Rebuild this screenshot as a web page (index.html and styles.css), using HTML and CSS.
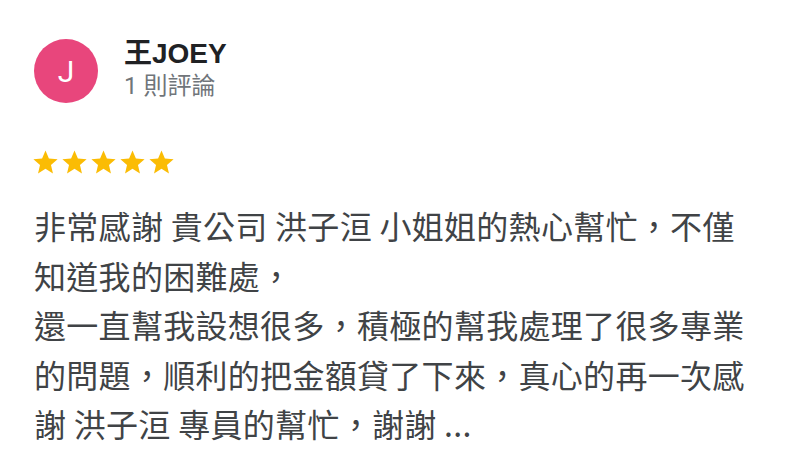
FILE: index.html
```html
<!DOCTYPE html>
<html lang="zh-Hant">
<head>
<meta charset="utf-8">
<link rel="stylesheet" href="styles.css">
</head>
<body>
<div class="review">
  <div class="header">
    <div class="avatar">J</div>
    <div class="who">
      <div class="name">王JOEY</div>
      <div class="count">1 則評論</div>
    </div>
  </div>
  <div class="stars">
    <svg viewBox="0 0 24 24"><path d="M12 17.27L18.18 21l-1.64-7.03L22 9.24l-7.19-.61L12 2 9.19 8.63 2 9.24l5.46 4.73L5.82 21z"/></svg>
    <svg viewBox="0 0 24 24"><path d="M12 17.27L18.18 21l-1.64-7.03L22 9.24l-7.19-.61L12 2 9.19 8.63 2 9.24l5.46 4.73L5.82 21z"/></svg>
    <svg viewBox="0 0 24 24"><path d="M12 17.27L18.18 21l-1.64-7.03L22 9.24l-7.19-.61L12 2 9.19 8.63 2 9.24l5.46 4.73L5.82 21z"/></svg>
    <svg viewBox="0 0 24 24"><path d="M12 17.27L18.18 21l-1.64-7.03L22 9.24l-7.19-.61L12 2 9.19 8.63 2 9.24l5.46 4.73L5.82 21z"/></svg>
    <svg viewBox="0 0 24 24"><path d="M12 17.27L18.18 21l-1.64-7.03L22 9.24l-7.19-.61L12 2 9.19 8.63 2 9.24l5.46 4.73L5.82 21z"/></svg>
  </div>
  <p class="text">非常感謝 貴公司 洪子洹 小姐姐的熱心幫忙，不僅<br>知道我的困難處，<br>還一直幫我設想很多，積極的幫我處理了很多專業<br>的問題，順利的把金額貸了下來，真心的再一次感<br>謝 洪子洹 專員的幫忙，謝謝 ...</p>
</div>
</body>
</html>
```
FILE: styles.css
```css
html, body {
  margin: 0;
  padding: 0;
  background: #ffffff;
}
body {
  width: 800px;
  height: 469px;
  overflow: hidden;
  font-family: "Noto Sans CJK TC", "Noto Sans", sans-serif;
}
.review {
  padding: 39px 0 0 34px;
}
.header {
  display: flex;
  align-items: center;
  gap: 26px;
}
.avatar {
  width: 64px;
  height: 64px;
  border-radius: 50%;
  background: #e8467c;
  color: #ffffff;
  display: flex;
  align-items: center;
  justify-content: center;
  font-family: "Roboto", "Liberation Sans", sans-serif;
  font-size: 30px;
  font-weight: 400;
}
.who {
  display: flex;
  flex-direction: column;
  margin-top: -2px;
}
.name {
  font-family: "Liberation Sans", "Noto Sans CJK TC", sans-serif;
  font-weight: 700;
  font-size: 28px;
  line-height: 32px;
  color: #202124;
}
.count {
  font-family: "Roboto", "Noto Sans CJK TC", sans-serif;
  font-size: 24px;
  line-height: 32px;
  color: #70757a;
}
.stars {
  display: flex;
  margin: 45px 0 0 -3px;
}
.stars svg {
  width: 29px;
  height: 29px;
  fill: #fbbc04;
}
.text {
  margin: 24px 0 0 0;
  font-size: 32px;
  line-height: 49.5px;
  letter-spacing: 0.3px;
  color: #404346;
  white-space: nowrap;
}
```
